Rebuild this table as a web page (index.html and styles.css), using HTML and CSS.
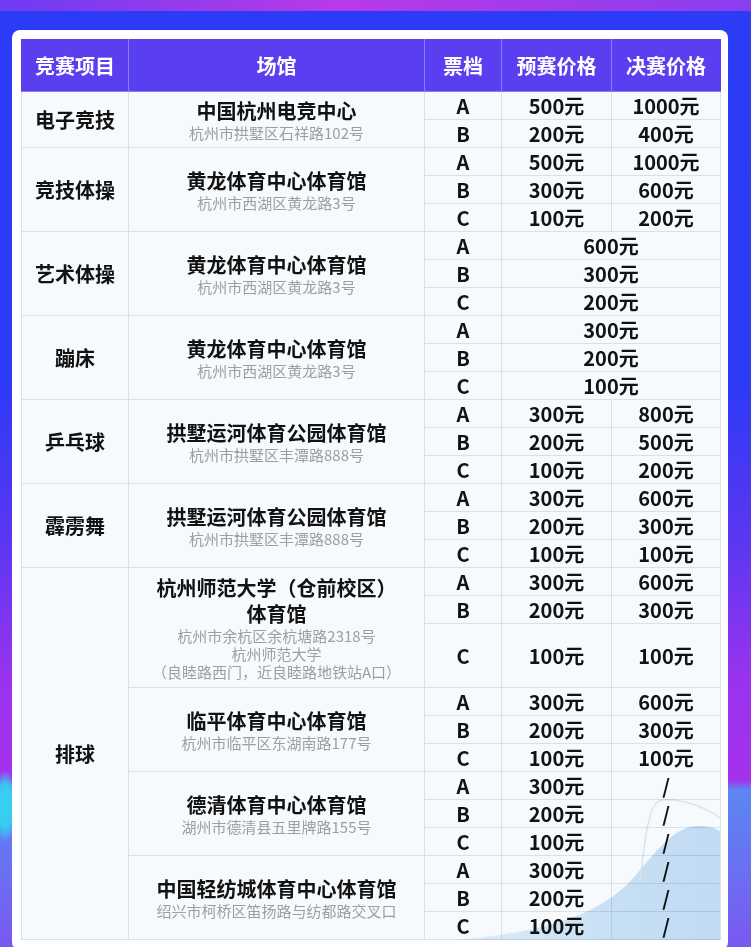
FILE: index.html
```html
<!DOCTYPE html>
<html lang="zh-CN">
<head>
<meta charset="utf-8">
<title>票价表</title>
<link rel="stylesheet" href="styles.css">
</head>
<body>
<div class="page">
  <div class="card">
    <table class="price">
      <colgroup>
        <col class="c-sport"><col class="c-venue"><col class="c-tier"><col class="c-pre"><col class="c-final">
      </colgroup>
      <thead>
        <tr><th>竞赛项目</th><th>场馆</th><th>票档</th><th>预赛价格</th><th>决赛价格</th></tr>
      </thead>
      <tbody>
        <tr><td rowspan="2" class="sport">电子竞技</td><td rowspan="2" class="venue"><div class="vname">中国杭州电竞中心</div><div class="vaddr">杭州市拱墅区石祥路102号</div></td><td>A</td><td>500元</td><td>1000元</td></tr>
        <tr><td>B</td><td>200元</td><td>400元</td></tr>

        <tr><td rowspan="3" class="sport">竞技体操</td><td rowspan="3" class="venue"><div class="vname">黄龙体育中心体育馆</div><div class="vaddr">杭州市西湖区黄龙路3号</div></td><td>A</td><td>500元</td><td>1000元</td></tr>
        <tr><td>B</td><td>300元</td><td>600元</td></tr>
        <tr><td>C</td><td>100元</td><td>200元</td></tr>

        <tr><td rowspan="3" class="sport">艺术体操</td><td rowspan="3" class="venue"><div class="vname">黄龙体育中心体育馆</div><div class="vaddr">杭州市西湖区黄龙路3号</div></td><td>A</td><td colspan="2">600元</td></tr>
        <tr><td>B</td><td colspan="2">300元</td></tr>
        <tr><td>C</td><td colspan="2">200元</td></tr>

        <tr><td rowspan="3" class="sport">蹦床</td><td rowspan="3" class="venue"><div class="vname">黄龙体育中心体育馆</div><div class="vaddr">杭州市西湖区黄龙路3号</div></td><td>A</td><td colspan="2">300元</td></tr>
        <tr><td>B</td><td colspan="2">200元</td></tr>
        <tr><td>C</td><td colspan="2">100元</td></tr>

        <tr><td rowspan="3" class="sport">乒乓球</td><td rowspan="3" class="venue"><div class="vname">拱墅运河体育公园体育馆</div><div class="vaddr">杭州市拱墅区丰潭路888号</div></td><td>A</td><td>300元</td><td>800元</td></tr>
        <tr><td>B</td><td>200元</td><td>500元</td></tr>
        <tr><td>C</td><td>100元</td><td>200元</td></tr>

        <tr><td rowspan="3" class="sport">霹雳舞</td><td rowspan="3" class="venue"><div class="vname">拱墅运河体育公园体育馆</div><div class="vaddr">杭州市拱墅区丰潭路888号</div></td><td>A</td><td>300元</td><td>600元</td></tr>
        <tr><td>B</td><td>200元</td><td>300元</td></tr>
        <tr><td>C</td><td>100元</td><td>100元</td></tr>

        <tr><td rowspan="12" class="sport">排球</td><td rowspan="3" class="venue"><div class="vname">杭州师范大学（仓前校区）<br>体育馆</div><div class="vaddr">杭州市余杭区余杭塘路2318号<br>杭州师范大学<br>（良睦路西门，近良睦路地铁站A口）</div></td><td>A</td><td>300元</td><td>600元</td></tr>
        <tr><td>B</td><td>200元</td><td>300元</td></tr>
        <tr class="tall"><td>C</td><td>100元</td><td>100元</td></tr>

        <tr><td rowspan="3" class="venue"><div class="vname">临平体育中心体育馆</div><div class="vaddr">杭州市临平区东湖南路177号</div></td><td>A</td><td>300元</td><td>600元</td></tr>
        <tr><td>B</td><td>200元</td><td>300元</td></tr>
        <tr><td>C</td><td>100元</td><td>100元</td></tr>

        <tr><td rowspan="3" class="venue"><div class="vname">德清体育中心体育馆</div><div class="vaddr">湖州市德清县五里牌路155号</div></td><td>A</td><td>300元</td><td>/</td></tr>
        <tr><td>B</td><td>200元</td><td>/</td></tr>
        <tr><td>C</td><td>100元</td><td>/</td></tr>

        <tr><td rowspan="3" class="venue"><div class="vname">中国轻纺城体育中心体育馆</div><div class="vaddr">绍兴市柯桥区笛扬路与纺都路交叉口</div></td><td>A</td><td>300元</td><td>/</td></tr>
        <tr><td>B</td><td>200元</td><td>/</td></tr>
        <tr><td>C</td><td>100元</td><td>/</td></tr>
      </tbody>
    </table>
    <svg class="wave" viewBox="0 0 260 150" width="260" height="150" aria-hidden="true">
      <defs>
        <linearGradient id="wv" x1="0" y1="0" x2="1" y2="0">
          <stop offset="0" stop-color="#e6f1fa"/>
          <stop offset="0.6" stop-color="#cfe4f6"/>
          <stop offset="1" stop-color="#c8e0f5"/>
        </linearGradient>
      </defs>
      <path d="M0,150 C70,142 140,132 180,80 C205,50 220,36 237,36 C248,36 255,38 260,41 L260,150 Z" fill="url(#wv)"/>
      <path d="M180,91 C185,50 188,12 202,10 C225,8 250,20 260,28" fill="none" stroke="#e4e8ee" stroke-width="1.5"/>
    </svg>
  </div>
</div>
</body>
</html>
```

FILE: styles.css
```css
html, body {
  margin: 0;
  padding: 0;
}
body {
  width: 751px;
  height: 947px;
  overflow: hidden;
  font-family: "Noto Sans CJK SC", "Noto Sans", sans-serif;
  background:
    linear-gradient(90deg, #6d3cf2 0%, #b73ae9 45%, #a43beb 70%, #8a3ef0 100%) 0 0 / 100% 11px no-repeat,
    radial-gradient(ellipse 14px 36px at 5px 806px, #37d4f2 0%, #3ac8f2 60%, rgba(58,200,242,0) 100%) 0 0 / 100% 100% no-repeat,
    linear-gradient(180deg, #2b3bf6 0px, #2d3af6 380px, #5a37f2 540px, #9a33ee 680px, #a531ec 780px, #5c86f2 790px, #6a70f2 870px, #7a58f0 947px);
}
.page {
  padding: 30px 0 0 12px;
}
.card {
  position: relative;
  width: 699px;
  background: #ffffff;
  border-radius: 8px;
  padding: 9px 8px 10px 9px;
}
.price {
  width: 699px;
  table-layout: fixed;
  border-collapse: collapse;
  color: #121212;
}
.c-sport { width: 107px; }
.c-venue { width: 296px; }
.c-tier { width: 77px; }
.c-pre { width: 110px; }
.c-final { width: 109px; }

.price th {
  height: 51px;
  background: #5a3ff1;
  color: #ffffff;
  font-size: 20px;
  font-weight: 700;
  border: 1px solid #8b7cf4;
  border-top-color: #5a3ff1;
  padding: 0;
  text-align: center;
  vertical-align: middle;
}
.price th:first-child { border-left-color: #5a3ff1; }
.price th:last-child { border-right-color: #5a3ff1; }

.price td {
  height: 27px;
  padding: 0;
  background: #f6fafd;
  border: 1px solid #d6e2ea;
  text-align: center;
  vertical-align: middle;
  font-size: 20px;
  font-weight: 700;
  line-height: 26px;
}
.price tr.tall td { height: 63px; }

.price td.sport {
  font-size: 20px;
}
.vname {
  font-size: 20px;
  font-weight: 700;
  line-height: 26px;
}
.vaddr {
  font-size: 15px;
  font-weight: 400;
  color: #9e9e9e;
  line-height: 18px;
}
.wave {
  position: absolute;
  right: 8px;
  bottom: 10px;
  mix-blend-mode: multiply;
  pointer-events: none;
}
```
